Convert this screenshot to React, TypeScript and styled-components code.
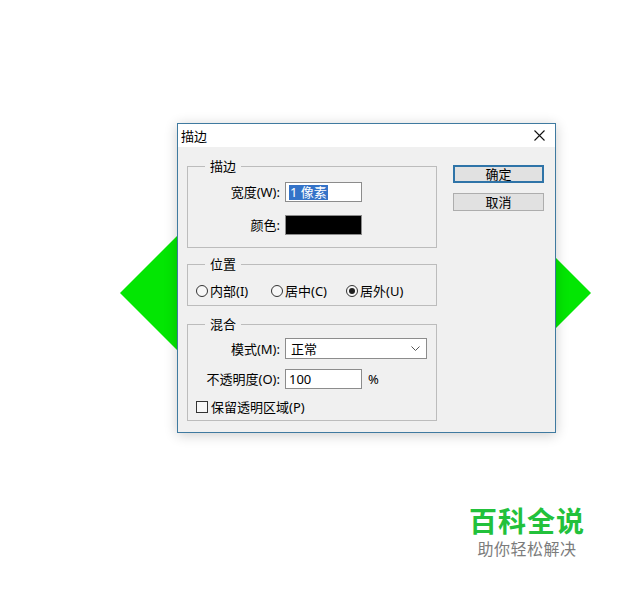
import React, { ReactElement } from "react";
import styled, { createGlobalStyle } from "styled-components";

const GlobalStyle = createGlobalStyle`
  html, body {
    margin: 0;
    padding: 0;
    background: #ffffff;
  }
  * {
    box-sizing: border-box;
  }
`;

const UI_FONT = `"Noto Sans", "Noto Sans CJK SC", sans-serif`;

const Stage = styled.div`
  position: relative;
  width: 635px;
  height: 591px;
  overflow: hidden;
  display: flex;
  flex-direction: column;
  align-items: flex-start;
  font-family: ${UI_FONT};
  color: #000;
`;

const Backdrop = styled.svg`
  position: absolute;
  left: 0;
  top: 0;
  z-index: 0;
`;

const Dialog = styled.div`
  position: relative;
  z-index: 1;
  margin: 123px 0 0 177px;
  width: 379px;
  height: 310px;
  border: 1px solid #3f7aa0;
  background: #f0f0f0;
  box-shadow: 0 2px 12px rgba(0, 0, 0, 0.2);
  display: flex;
  flex-direction: column;
`;

const TitleBar = styled.div`
  height: 23px;
  background: #ffffff;
  display: flex;
  align-items: center;
  justify-content: space-between;
  padding: 0 10px 0 3px;
  font-size: 13px;
  line-height: 16px;
`;

const Body = styled.div`
  display: flex;
  padding: 18px 11px 0 9px;
  gap: 16px;
`;

const LeftCol = styled.div`
  width: 251px;
  padding-top: 1px;
  display: flex;
  flex-direction: column;
`;

const Group = styled.div<{ $h: number; $mt?: number }>`
  position: relative;
  height: ${(p) => p.$h}px;
  margin-top: ${(p) => p.$mt ?? 0}px;
  border: 1px solid #bcbcbc;
`;

const Legend = styled.span`
  position: absolute;
  top: -9px;
  left: 17px;
  padding: 0 5px;
  background: #f0f0f0;
  font-size: 13px;
  line-height: 17px;
`;

const FieldGrid = styled.div<{ $pt: number; $gap: number }>`
  display: grid;
  grid-template-columns: 92px auto;
  column-gap: 5px;
  row-gap: ${(p) => p.$gap}px;
  align-items: center;
  padding-top: ${(p) => p.$pt}px;
`;

const Label = styled.span`
  text-align: right;
  font-size: 13px;
  line-height: 16px;
  white-space: nowrap;
`;

const TextBox = styled.div`
  width: 77px;
  height: 20px;
  background: #ffffff;
  border: 1px solid #8c8c8c;
  display: flex;
  align-items: center;
  padding-left: 3px;
  font-size: 13px;
  line-height: 16px;
`;

const Selected = styled.span`
  background: #3473c8;
  color: #ffffff;
  padding: 0 1px;
  line-height: 15px;
`;

const Swatch = styled.div`
  width: 77px;
  height: 20px;
  border: 1px solid #8c8c8c;
  background: #000000;
`;

const Inline = styled.div`
  display: flex;
  align-items: center;
  gap: 6px;
  font-size: 13px;
  line-height: 16px;
`;

const SelectBox = styled.div`
  width: 142px;
  height: 21px;
  background: #ffffff;
  border: 1px solid #8c8c8c;
  display: flex;
  align-items: center;
  justify-content: space-between;
  padding: 0 6px 0 5px;
  font-size: 13px;
  line-height: 16px;
`;

const RadioRow = styled.div`
  display: flex;
  align-items: center;
  padding: 18px 0 0 8px;
`;

const Option = styled.label`
  display: flex;
  align-items: center;
  gap: 2px;
  font-size: 13px;
  line-height: 16px;
  white-space: nowrap;
`;

const RadioOption = styled(Option)`
  width: 75px;
`;

const RadioDot = styled.span<{ $on?: boolean }>`
  width: 12px;
  height: 12px;
  border-radius: 50%;
  border: 1px solid #333333;
  background: #f7f7f7;
  display: flex;
  align-items: center;
  justify-content: center;
  &::after {
    content: "";
    width: 6px;
    height: 6px;
    border-radius: 50%;
    background: ${(p) => (p.$on ? "#1f1f1f" : "transparent")};
  }
`;

const CheckRow = styled(Option)`
  padding: 10px 0 0 8px;
  gap: 3px;
`;

const CheckBox = styled.span`
  width: 12px;
  height: 12px;
  border: 1px solid #333333;
  background: #f7f7f7;
`;

const ButtonCol = styled.div`
  display: flex;
  flex-direction: column;
  gap: 10px;
`;

const Button = styled.div<{ $primary?: boolean }>`
  width: 91px;
  height: 18px;
  display: flex;
  align-items: center;
  justify-content: center;
  background: #e1e1e1;
  border: ${(p) => (p.$primary ? "2px solid #2f74a8" : "1px solid #adadad")};
  font-size: 13px;
  line-height: 16px;
`;

const Watermark = styled.div`
  position: relative;
  z-index: 1;
  margin: 71px 0 0 469px;
  display: flex;
  flex-direction: column;
  align-items: center;
  gap: 3px;
  font-family: "Noto Sans CJK SC", sans-serif;
`;

const BrandTitle = styled.div`
  font-size: 28px;
  line-height: 32px;
  font-weight: 700;
  color: #22c13b;
  letter-spacing: 1px;
`;

const BrandSub = styled.div`
  font-size: 16px;
  line-height: 18px;
  color: #7c7c7c;
  letter-spacing: 0.5px;
`;

function CloseIcon(): ReactElement {
  return (
    <svg width="11" height="11" viewBox="0 0 11 11">
      <path d="M0.5 0.5 L10.5 10.5 M10.5 0.5 L0.5 10.5" stroke="#111" strokeWidth="1.1" fill="none" />
    </svg>
  );
}

function Chevron(): ReactElement {
  return (
    <svg width="9" height="5" viewBox="0 0 9 5">
      <path d="M0.5 0.5 L4.5 4.5 L8.5 0.5" stroke="#555" strokeWidth="1" fill="none" />
    </svg>
  );
}

export default function App(): ReactElement {
  return (
    <>
      <GlobalStyle />
      <Stage>
        <Backdrop width="635" height="591" viewBox="0 0 635 591">
          <polygon
            points="120,293 178,235 556,258 591,293 556,328 178,351"
            fill="#03e603"
          />
        </Backdrop>

        <Dialog>
          <TitleBar>
            <span>描边</span>
            <CloseIcon />
          </TitleBar>

          <Body>
            <LeftCol>
              <Group $h={82}>
                <Legend>描边</Legend>
                <FieldGrid $pt={15} $gap={13}>
                  <Label>宽度(W):</Label>
                  <TextBox>
                    <Selected>1 像素</Selected>
                  </TextBox>
                  <Label>颜色:</Label>
                  <Swatch />
                </FieldGrid>
              </Group>

              <Group $h={42} $mt={16}>
                <Legend>位置</Legend>
                <RadioRow>
                  <RadioOption>
                    <RadioDot />
                    内部(I)
                  </RadioOption>
                  <RadioOption>
                    <RadioDot />
                    居中(C)
                  </RadioOption>
                  <RadioOption>
                    <RadioDot $on />
                    居外(U)
                  </RadioOption>
                </RadioRow>
              </Group>

              <Group $h={97} $mt={18}>
                <Legend>混合</Legend>
                <FieldGrid $pt={13} $gap={10}>
                  <Label>模式(M):</Label>
                  <SelectBox>
                    <span>正常</span>
                    <Chevron />
                  </SelectBox>
                  <Label>不透明度(O):</Label>
                  <Inline>
                    <TextBox>100</TextBox>
                    <span>%</span>
                  </Inline>
                </FieldGrid>
                <CheckRow>
                  <CheckBox />
                  保留透明区域(P)
                </CheckRow>
              </Group>
            </LeftCol>

            <ButtonCol>
              <Button $primary>确定</Button>
              <Button>取消</Button>
            </ButtonCol>
          </Body>
        </Dialog>

        <Watermark>
          <BrandTitle>百科全说</BrandTitle>
          <BrandSub>助你轻松解决</BrandSub>
        </Watermark>
      </Stage>
    </>
  );
}
